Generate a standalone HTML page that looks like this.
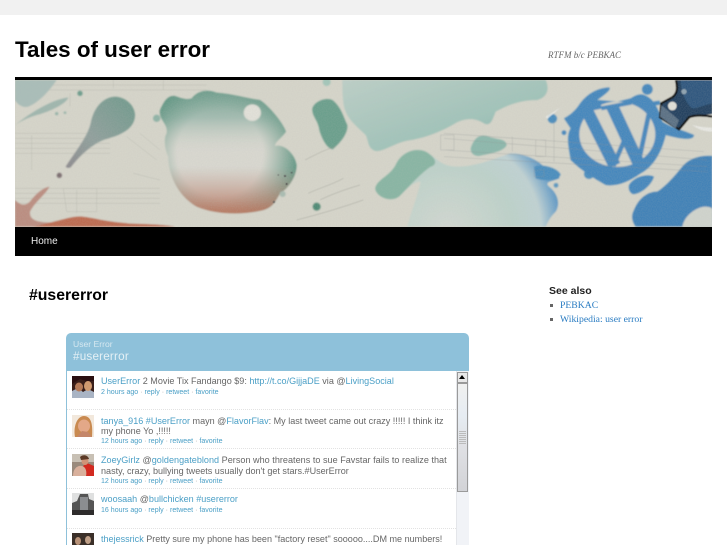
<!DOCTYPE html>
<html><head><meta charset="utf-8"><title>Tales of user error</title>
<style>
html,body{margin:0;padding:0;background:#fff;width:727px;height:545px;overflow:hidden;}
#w{position:relative;width:727px;height:545px;overflow:hidden;font-family:"Liberation Sans",sans-serif;}
.a{position:absolute;white-space:nowrap;}
.t{position:absolute;left:101px;white-space:nowrap;font-size:9.05px;line-height:11px;color:#666;}
.t a{color:#4a9fc6;text-decoration:none;}
.m{font-size:7.05px;color:#4a9fc6;}
.m i{font-style:normal;color:#aaa;}
.d{position:absolute;left:67px;width:389px;border-top:1px dotted #e2e2e2;}
.av{position:absolute;left:72px;width:22px;height:22px;}
</style></head><body><div id="w">
<div class="a" style="left:0;top:0;width:727px;height:15px;background:#f1f1f1"></div>
<div class="a" style="left:15px;top:36px;font-size:22.4px;line-height:28px;font-weight:bold;color:#000">Tales of user error</div>
<div class="a" style="left:548px;top:49px;font:italic 9px/12px 'Liberation Serif',serif;color:#666">RTFM b/c PEBKAC</div>
<div class="a" style="left:15px;top:77px;width:697px;height:3px;background:#000"></div>

<svg class="a" style="left:15px;top:80px" width="697" height="147" viewBox="15 80 697 147" xmlns="http://www.w3.org/2000/svg">
<defs>
<filter id="b" x="-10%" y="-10%" width="120%" height="120%"><feGaussianBlur stdDeviation="1.6"/></filter>
<filter id="all" x="0" y="0" width="100%" height="100%"><feGaussianBlur stdDeviation=".6"/></filter>
<filter id="n" x="0" y="0" width="100%" height="100%"><feTurbulence type="fractalNoise" baseFrequency="0.8" numOctaves="2" seed="3"/><feColorMatrix values="0 0 0 0 .5 0 0 0 0 .5 0 0 0 0 .48 0 0 0 .55 -.12"/></filter>
<linearGradient id="gt" x1="0" y1="0" x2="0" y2="1"><stop offset="0" stop-color="#7ba595"/><stop offset=".22" stop-color="#a3bcb1"/><stop offset=".5" stop-color="#d3d5cc" stop-opacity="0"/></linearGradient>
<radialGradient id="gr" gradientUnits="userSpaceOnUse" cx="660" cy="250" r="235"><stop offset=".55" stop-color="#6f9e8c" stop-opacity="0"/><stop offset="1" stop-color="#5f9582"/></radialGradient>
<linearGradient id="rd" x1="0" y1="0" x2="0" y2="1"><stop offset=".62" stop-color="#c0978a" stop-opacity="0"/><stop offset=".98" stop-color="#b9745c" stop-opacity=".9"/></linearGradient>
<linearGradient id="td" x1="1" y1="0" x2="0" y2="1"><stop offset="0" stop-color="#6f9a8c"/><stop offset=".6" stop-color="#90a09c"/><stop offset="1" stop-color="#8d8a8e"/></linearGradient>
<linearGradient id="lt" x1="0" y1="0" x2="1" y2="1"><stop offset="0" stop-color="#bccfc7"/><stop offset=".6" stop-color="#a0c3b9"/><stop offset="1" stop-color="#78aca5"/></linearGradient>
<radialGradient id="lw" gradientUnits="userSpaceOnUse" cx="250" cy="480" r="360"><stop offset="0" stop-color="#d2d8d1"/><stop offset=".55" stop-color="#bdd2ca"/><stop offset=".78" stop-color="#c0d2d3"/><stop offset=".92" stop-color="#6fa2c8"/><stop offset="1" stop-color="#4587bd"/></radialGradient>
</defs>
<g filter="url(#all)">
<rect x="0" y="60" width="727" height="190" fill="#d6d5ca"/>

<g transform="translate(0,70) scale(.33333)">
 <g stroke="#a9a99f" stroke-width="1.5" fill="none" opacity=".55">
  <path d="M45 190H330M45 205H330M45 220H330M45 235H330M45 250H330M45 355H480M45 370H480M45 385H480M45 400H480M45 60H620M45 45H620"/>
  <path d="M95 195V300M210 70V110M190 355h100v70h-90zM230 360v70M400 310l80 20M420 190l60 50M380 200l90 70M340 30v25M490 30v30"/>
 </g>
 <g filter="url(#b)">
  <path d="M45 30H170C150 60 120 95 85 110 65 115 50 100 45 90Z" fill="#a9bdb8"/>
  <path d="M45 165C90 130 150 90 205 82 200 100 150 125 110 135 85 142 60 155 45 165Z" fill="#9fb6ad"/>
  <circle cx="240" cy="70" r="8" fill="#6d9d8c"/><circle cx="170" cy="131" r="5" fill="#96b3a8"/><circle cx="195" cy="128" r="4" fill="#96b3a8"/>
  <path d="M198 288C230 240 262 200 272 160 282 110 310 82 345 80 385 82 408 115 405 140 402 175 365 195 325 205 285 215 245 250 212 292 205 295 196 294 198 288Z" fill="url(#td)"/>
  <circle cx="178" cy="316" r="8" fill="#7b6d70"/>
  <circle cx="470" cy="145" r="11" fill="#8fb3a6"/>
  <path d="M45 470V390C60 405 75 410 90 395 105 375 125 355 148 350 140 370 105 395 90 425 88 445 100 458 160 458 190 448 215 438 245 440 290 445 330 460 420 462 470 464 500 466 525 470Z" fill="#bb8d80"/>
  <path d="M100 470C150 460 215 438 245 440 290 445 330 460 420 462 470 464 500 466 525 470Z" fill="#bd6a50"/>
  <path d="M480 120C490 100 500 75 525 78 545 85 560 90 575 85 595 60 625 58 650 68 700 72 740 85 780 90 810 110 850 160 858 185 845 205 825 215 825 228 850 220 885 250 890 285 890 320 865 355 840 370 825 395 820 410 790 420 730 435 650 435 590 410 530 375 505 310 505 260 495 240 490 205 500 190 505 160 475 150 480 120Z" fill="#d9d8d0"/>
  <path d="M480 120C490 100 500 75 525 78 545 85 560 90 575 85 595 60 625 58 650 68 700 72 740 85 780 90 810 110 850 160 858 185 845 205 825 215 825 228 850 220 885 250 890 285 890 320 865 355 840 370 825 395 820 410 790 420 730 435 650 435 590 410 530 375 505 310 505 260 495 240 490 205 500 190 505 160 475 150 480 120Z" fill="url(#gt)"/>
  <path d="M480 120C490 100 500 75 525 78 545 85 560 90 575 85 595 60 625 58 650 68 700 72 740 85 780 90 810 110 850 160 858 185 845 205 825 215 825 228 850 220 885 250 890 285 890 320 865 355 840 370 825 395 820 410 790 420 730 435 650 435 590 410 530 375 505 310 505 260 495 240 490 205 500 190 505 160 475 150 480 120Z" fill="url(#gr)"/>
  <path d="M480 120C490 100 500 75 525 78 545 85 560 90 575 85 595 60 625 58 650 68 700 72 740 85 780 90 810 110 850 160 858 185 845 205 825 215 825 228 850 220 885 250 890 285 890 320 865 355 840 370 825 395 820 410 790 420 730 435 650 435 590 410 530 375 505 310 505 260 495 240 490 205 500 190 505 160 475 150 480 120Z" fill="url(#rd)"/>
  <ellipse cx="757" cy="128" rx="26" ry="25" fill="#e2e1d9"/>
  <circle cx="950" cy="410" r="12" fill="#4f8a74"/>
  <circle cx="848" cy="372" r="9" fill="#a9bcb1"/>
  <path d="M937 115C945 90 985 80 1000 92 1025 115 1030 140 1042 165 1045 190 1020 220 998 238 980 235 965 205 958 180 955 150 935 140 937 115Z" fill="#6b9f8c"/>
  <circle cx="980" cy="36" r="12" fill="#a3c6b9"/>
 </g>
 <g fill="#3b3038"><circle cx="855" cy="318" r="3"/><circle cx="875" cy="308" r="2.5"/><circle cx="860" cy="342" r="3"/><circle cx="835" cy="315" r="2"/><circle cx="822" cy="396" r="3.5" fill="#555"/></g>
 <path d="M915 270c20-10 55-30 90-40M925 370c30-15 70-25 105-45M960 390c30-15 70-30 120-45M890 450c40-10 100-25 200-60" stroke="#9a9a90" stroke-width="2" fill="none" opacity=".5"/>
</g>

<g transform="translate(364,70) scale(.33333)">
 <g filter="url(#b)">
  <path d="M-65 30H545C555 50 555 80 520 90 470 90 430 105 395 125 385 150 380 170 360 160 330 140 295 145 265 165 230 185 180 205 130 212 90 220 60 245 35 243 10 235 15 215 5 195-20 170-50 150-60 110-65 80-65 55-65 30Z" fill="url(#lt)"/>
  <path d="M35 350C45 325 75 320 95 285 110 250 150 230 185 245 220 265 230 290 280 290 340 290 400 262 440 250 480 250 520 270 540 290 570 295 590 310 585 325 560 335 540 335 555 350 580 370 590 400 575 425 555 445 550 460 545 470H130C140 430 160 380 170 335 150 335 130 355 105 380 85 395 55 385 45 375 35 365 32 358 35 350Z" fill="url(#lw)"/>
  <path d="M35 350C45 325 75 320 95 285 110 250 150 230 185 245 220 265 220 285 200 290 170 310 140 345 105 380 85 395 55 385 45 375 35 365 32 358 35 350Z" fill="#88b5a3"/>
  <path d="M320 235C330 205 345 190 375 200 400 210 425 205 428 225 420 245 380 250 345 258 330 258 320 250 320 235Z" fill="#8cb8ac"/>
  <path d="M510 290C535 280 585 295 590 315 580 330 540 335 515 325Z" fill="#4a8dbe"/>
  <circle cx="565" cy="146" r="14" fill="#4a8dbe"/>
  <circle cx="576" cy="346" r="7" fill="#5a97c0"/>
  <circle cx="675" cy="312" r="15" fill="#4a8dbe"/>
  <path d="M600 145C620 135 635 120 645 105 665 75 695 55 735 52 745 58 720 75 700 90L760 95 800 85C815 75 830 70 840 75 870 85 885 120 895 155 915 170 955 180 990 195 990 210 960 210 905 195 895 240 870 290 830 310 795 335 760 350 725 345 690 325 650 300 620 270 615 235 605 200 620 175 600 145Z" fill="#4587bd"/>
  <circle cx="850" cy="58" r="16" fill="#4587bd"/><circle cx="600" cy="188" r="7" fill="#4587bd"/>
  <path d="M795 345C810 320 850 310 870 320 860 350 825 375 805 372 795 365 793 355 795 345Z" fill="#4587bd"/>
  <ellipse cx="760" cy="193" rx="114" ry="98" fill="#d6d5ca"/>
  <g stroke="#4587bd" fill="none" stroke-linecap="butt">
   <path d="M668 120L752 287" stroke-width="37"/>
   <path d="M745 110L825 282" stroke-width="37"/>
   <path d="M748 288L790 190" stroke-width="14"/>
   <path d="M822 285L860 106" stroke-width="14"/>
   <path d="M642 124L712 110M712 115L802 98M830 106L888 98" stroke-width="12"/>
  </g>
  <path d="M1045 258C1010 255 975 265 955 290 935 315 905 350 880 365 850 365 825 385 810 420 800 440 805 455 815 470H1045Z" fill="#4181b7"/>
  <path d="M955 470C960 440 990 415 1020 410 1035 410 1045 412 1045 420V470Z" fill="#d0d4cd"/>
 </g>
 <path d="M240 190l780 55M240 205l790 65M240 240l790 50M240 260l790 45M230 195h40v45h-40zM515 210h30v50h-30zM445 200v45M570 150v125M510 300h30v20h-30z" stroke="#8c8f8d" stroke-width="1.6" fill="none" opacity=".45"/>
 <path d="M940 30H1045V132C1020 135 990 135 975 142 960 155 952 168 942 178L885 142 890 100 925 80C945 75 935 50 940 30Z" fill="#22405f"/>
 <path d="M936 30C942 55 940 70 925 82L892 100 888 142 945 178 975 142C990 135 1020 135 1045 140" fill="none" stroke="#0b0b0e" stroke-width="7"/>
 <path d="M950 30H1045V100C1020 105 1000 115 985 115 970 105 950 70 950 30Z" fill="#2e567e"/>
 <path d="M892 105L945 150 935 175 888 140Z" fill="#5a7084"/>
 <circle cx="925" cy="108" r="13" fill="#e0e0d8"/><circle cx="960" cy="65" r="8" fill="#8fa3b0"/>
 <path d="M985 165c20 5 40 8 60 8v12c-25 0-45-8-60-20ZM545 140l45-28-40 35Z" fill="#eeeeea" opacity=".8"/>
</g>
</g>
<rect x="15" y="80" width="697" height="147" filter="url(#n)" opacity=".45"/>
</svg>

<div class="a" style="left:15px;top:227px;width:697px;height:29px;background:#000"></div>
<div class="a" style="left:31px;top:235px;font-size:10px;line-height:13px;color:#eee">Home</div>

<div class="a" style="left:29px;top:286px;font-size:15.8px;line-height:19px;font-weight:bold;color:#000">#usererror</div>

<div class="a" style="left:549px;top:285px;font-size:10.5px;line-height:13px;font-weight:bold;color:#222">See also</div>
<div class="a" style="left:550px;top:304px;width:3px;height:3px;background:#666"></div>
<div class="a" style="left:550px;top:318px;width:3px;height:3px;background:#666"></div>
<div class="a" style="left:560px;top:299px;font:9.7px/13px 'Liberation Serif',serif;color:#2a7cc2">PEBKAC</div>
<div class="a" style="left:560px;top:313px;font:9.7px/13px 'Liberation Serif',serif;color:#2a7cc2">Wikipedia: user error</div>

<div class="a" style="left:66px;top:333px;width:403px;height:212px;background:#8ec1da;border-radius:5px 5px 0 0"></div>
<div class="a" style="left:73px;top:338px;font-size:8.6px;line-height:12px;color:#d6e8f0">User Error</div>
<div class="a" style="left:73px;top:349px;font-size:11.7px;line-height:15px;letter-spacing:.2px;color:#e4f0f5">#usererror</div>
<div class="a" style="left:67px;top:371px;width:401px;height:174px;background:#fff"></div>

<svg class="av" style="top:376px" viewBox="0 0 22 22"><rect width="22" height="22" fill="#3a1f1a"/><path d="M0 0h22v5H14L8 3 0 8Z" fill="#2a0f10"/><path d="M0 22V15l6-3 5 4 5-3 6 3v6Z" fill="#a9b4c4"/><ellipse cx="7" cy="11" rx="4" ry="4.5" fill="#b57a58"/><ellipse cx="16" cy="10" rx="4" ry="5" fill="#d09a70"/></svg>
<svg class="av" style="top:415px" viewBox="0 0 22 22"><rect width="22" height="22" fill="#f2e8dc"/><path d="M3 22C1 12 5 1 12 1s9 8 8 21Z" fill="#c98a50"/><ellipse cx="12" cy="11" rx="6" ry="6.5" fill="#e3a888"/><path d="M5 22l5-6 6 1 4 5Z" fill="#c4866a"/></svg>
<svg class="av" style="top:454px" viewBox="0 0 22 22"><rect width="22" height="22" fill="#9a8a7c"/><path d="M0 0h22v8H0Z" fill="#c8c0b4"/><path d="M11 22V12l4-3 7 3v10Z" fill="#d22a20"/><path d="M1 22c0-7 4-11 9-10 4 1 5 6 4 10Z" fill="#d9b09c"/><ellipse cx="13" cy="7" rx="3.5" ry="4" fill="#cf9478"/><path d="M8 3c3-3 8-2 9 2l-8 1Z" fill="#5c3a26"/></svg>
<svg class="av" style="top:493px" viewBox="0 0 22 22"><rect width="22" height="22" fill="#dfe0e0"/><path d="M0 22V10l5-2 3-7h8l1 5 5 2v14Z" fill="#555"/><path d="M8 4h8v18H8Z" fill="#8b8d90"/><path d="M0 17h22v5H0Z" fill="#2e2c2c"/></svg>
<svg class="av" style="top:533px" viewBox="0 0 22 22"><rect width="22" height="22" fill="#3a2f28"/><ellipse cx="6" cy="8" rx="3" ry="4" fill="#b89278"/><ellipse cx="16" cy="7" rx="3" ry="4" fill="#c0a088"/></svg>

<div class="t" style="top:376px"><a href="#">UserError</a> 2 Movie Tix Fandango $9: <a href="#">http://t.co/GijjaDE</a> via @<a href="#">LivingSocial</a></div>
<div class="t m" style="top:387px">2 hours ago <i>·</i> reply <i>·</i> retweet <i>·</i> favorite</div>
<div class="d" style="top:409px"></div>
<div class="t" style="top:416px"><a href="#">tanya_916</a> <a href="#">#UserError</a> mayn @<a href="#">FlavorFlav</a>: My last tweet came out crazy !!!!! I think itz</div>
<div class="t" style="top:426px">my phone Yo ,!!!!!</div>
<div class="t m" style="top:436px">12 hours ago <i>·</i> reply <i>·</i> retweet <i>·</i> favorite</div>
<div class="d" style="top:448px"></div>
<div class="t" style="top:455px;letter-spacing:.03px"><a href="#">ZoeyGirlz</a> @<a href="#">goldengateblond</a> Person who threatens to sue Favstar fails to realize that</div>
<div class="t" style="top:466px">nasty, crazy, bullying tweets usually don't get stars.#UserError</div>
<div class="t m" style="top:476px">12 hours ago <i>·</i> reply <i>·</i> retweet <i>·</i> favorite</div>
<div class="d" style="top:488px"></div>
<div class="t" style="top:494px"><a href="#">woosaah</a> @<a href="#">bullchicken</a> <a href="#">#usererror</a></div>
<div class="t m" style="top:505px">16 hours ago <i>·</i> reply <i>·</i> retweet <i>·</i> favorite</div>
<div class="d" style="top:528px"></div>
<div class="t" style="top:534px"><a href="#">thejessrick</a> Pretty sure my phone has been "factory reset" sooooo....DM me numbers!</div>

<div class="a" style="left:456px;top:371px;width:12px;height:174px;background:#f1f3f7;border-left:1px solid #e4e6ea"></div>
<div class="a" style="left:457px;top:372px;width:11px;height:11px;background:#e8e8e8;border:1px solid #999;box-sizing:border-box"></div>
<div class="a" style="left:459px;top:375px;width:0;height:0;border-left:3.5px solid transparent;border-right:3.5px solid transparent;border-bottom:4px solid #000"></div>
<div class="a" style="left:457px;top:383px;width:11px;height:109px;box-sizing:border-box;border:1px solid #9a9a9a;background:linear-gradient(#f0f0f0,#e6ecf2 30%,#dfe0e4 60%,#d2d3d7)"></div>
<div class="a" style="left:459px;top:431px;width:7px;height:14px;background:repeating-linear-gradient(#bbb 0 1px,transparent 1px 2px)"></div>
</div></body></html>
